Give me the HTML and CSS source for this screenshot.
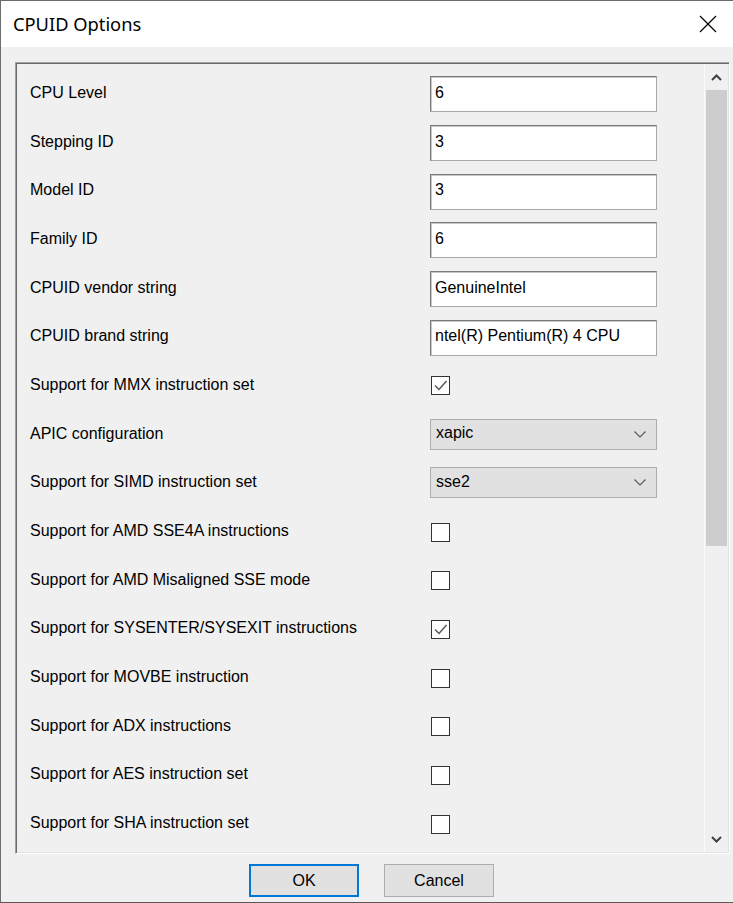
FILE: index.html
```html
<!DOCTYPE html>
<html>
<head>
<meta charset="utf-8">
<link rel="stylesheet" href="styles.css">
</head>
<body>
<div class="window">
  <div class="titlebar">
    <span class="title">CPUID Options</span>
    <svg class="close" width="18" height="18" viewBox="0 0 18 18"><path d="M1 1 L17 17 M17 1 L1 17" stroke="#000" stroke-width="1.2" fill="none"/></svg>
  </div>
  <div class="body">
    <div class="panel">
      <div class="rows">
        <div class="row"><span class="label">CPU Level</span><div class="input">6</div></div>
        <div class="row"><span class="label">Stepping ID</span><div class="input">3</div></div>
        <div class="row"><span class="label">Model ID</span><div class="input">3</div></div>
        <div class="row"><span class="label">Family ID</span><div class="input">6</div></div>
        <div class="row"><span class="label">CPUID vendor string</span><div class="input">GenuineIntel</div></div>
        <div class="row"><span class="label">CPUID brand string</span><div class="input">ntel(R) Pentium(R) 4 CPU</div></div>
        <div class="row"><span class="label">Support for MMX instruction set</span><div class="check on"><svg width="17" height="17" viewBox="0 0 17 17"><path d="M3 8.5 L7 12.5 L14.5 4" stroke="#555" stroke-width="1.4" fill="none"/></svg></div></div>
        <div class="row"><span class="label">APIC configuration</span><div class="select"><span>xapic</span><svg width="12" height="7" viewBox="0 0 12 7"><path d="M0.5 0.5 L6 6 L11.5 0.5" stroke="#555" stroke-width="1.1" fill="none"/></svg></div></div>
        <div class="row"><span class="label">Support for SIMD instruction set</span><div class="select"><span>sse2</span><svg width="12" height="7" viewBox="0 0 12 7"><path d="M0.5 0.5 L6 6 L11.5 0.5" stroke="#555" stroke-width="1.1" fill="none"/></svg></div></div>
        <div class="row"><span class="label">Support for AMD SSE4A instructions</span><div class="check"></div></div>
        <div class="row"><span class="label">Support for AMD Misaligned SSE mode</span><div class="check"></div></div>
        <div class="row"><span class="label">Support for SYSENTER/SYSEXIT instructions</span><div class="check on"><svg width="17" height="17" viewBox="0 0 17 17"><path d="M3 8.5 L7 12.5 L14.5 4" stroke="#555" stroke-width="1.4" fill="none"/></svg></div></div>
        <div class="row"><span class="label">Support for MOVBE instruction</span><div class="check"></div></div>
        <div class="row"><span class="label">Support for ADX instructions</span><div class="check"></div></div>
        <div class="row"><span class="label">Support for AES instruction set</span><div class="check"></div></div>
        <div class="row"><span class="label">Support for SHA instruction set</span><div class="check"></div></div>
      </div>
      <div class="scrollbar">
        <div class="arrow"><svg width="11" height="7" viewBox="0 0 11 7"><path d="M1 6 L5.5 1.5 L10 6" stroke="#404040" stroke-width="2" fill="none"/></svg></div>
        <div class="track"><div class="thumb"></div></div>
        <div class="arrow"><svg width="11" height="7" viewBox="0 0 11 7"><path d="M1 1 L5.5 5.5 L10 1" stroke="#404040" stroke-width="2" fill="none"/></svg></div>
      </div>
    </div>
    <div class="buttons">
      <div class="btn default">OK</div>
      <div class="btn">Cancel</div>
    </div>
  </div>
</div>
</body>
</html>
```
FILE: styles.css
```css
* { box-sizing: border-box; }
html, body { margin: 0; padding: 0; }
body {
  width: 733px;
  height: 903px;
  background: #6b6b6b;
  font-family: "Liberation Sans", Arial, sans-serif;
  overflow: hidden;
}
.window {
  width: 733px;
  height: 902px;
  margin-top: 1px;
  border-left: 1px solid #6e6e6e;
  border-bottom: 1px solid #5a5a5a;
  display: flex;
  flex-direction: column;
  background: #f0f0f0;
}
.titlebar {
  height: 46px;
  background: #fff;
  display: flex;
  align-items: center;
  justify-content: space-between;
  padding: 0 16px 0 12px;
}
.title {
  font-family: "Noto Sans", "Open Sans", sans-serif;
  font-size: 18.3px;
  color: #000;
  padding-bottom: 1px;
}
.body {
  flex: 1;
  display: flex;
  flex-direction: column;
  padding: 15px 3px 0 14px;
}
.panel {
  height: 792px;
  display: flex;
  border-top: 1px solid #a0a0a0;
  border-left: 1px solid #a0a0a0;
  border-right: 1px solid #fff;
  border-bottom: 1px solid #fff;
  box-shadow: inset 1px 1px 0 #696969, inset -1px -1px 0 #e3e3e3;
  padding: 1px;
  overflow: hidden;
}
.rows {
  flex: 1;
  padding: 5px 0 0 13px;
  display: flex;
  flex-direction: column;
}
.row {
  height: 48.7px;
  flex: none;
  display: flex;
  align-items: center;
  font-size: 16px;
  color: #000;
}
.label {
  width: 400px;
  flex: none;
  margin-top: -1px;
}
.input {
  width: 227px;
  height: 36px;
  background: #fff;
  border: 1px solid #7a7a7a;
  border-right-color: #a8a8a8;
  border-bottom-color: #a8a8a8;
  box-shadow: inset 1px 1px 0 #c8c8c8;
  padding: 0 0 3px 4px;
  display: flex;
  align-items: center;
  margin-top: 2px;
}
.check {
  width: 19px;
  height: 19px;
  background: #fff;
  border: 1px solid #333;
  margin-left: 1px;
  margin-top: 1px;
}
.check svg { display: block; }
.select {
  width: 227px;
  height: 31px;
  background: #e1e1e1;
  border: 1px solid #adadad;
  display: flex;
  align-items: center;
  justify-content: space-between;
  padding: 0 10px 2px 5px;
}
.select svg { margin-top: 2px; }
.scrollbar {
  width: 24px;
  flex: none;
  display: flex;
  flex-direction: column;
  border-left: 1px solid #fafafa;
}
.arrow {
  height: 26px;
  display: flex;
  align-items: center;
  justify-content: center;
}
.track {
  flex: 1;
  display: flex;
  flex-direction: column;
}
.thumb {
  height: 456px;
  margin: 0 1px;
  background: #cdcdcd;
}
.buttons {
  display: flex;
  gap: 25px;
  padding: 10px 0 0 234px;
}
.btn {
  width: 110px;
  height: 33px;
  background: #e1e1e1;
  border: 1px solid #adadad;
  display: flex;
  align-items: center;
  justify-content: center;
  font-size: 16px;
  color: #000;
}
.btn.default {
  border: 2px solid #0078d7;
}
```
